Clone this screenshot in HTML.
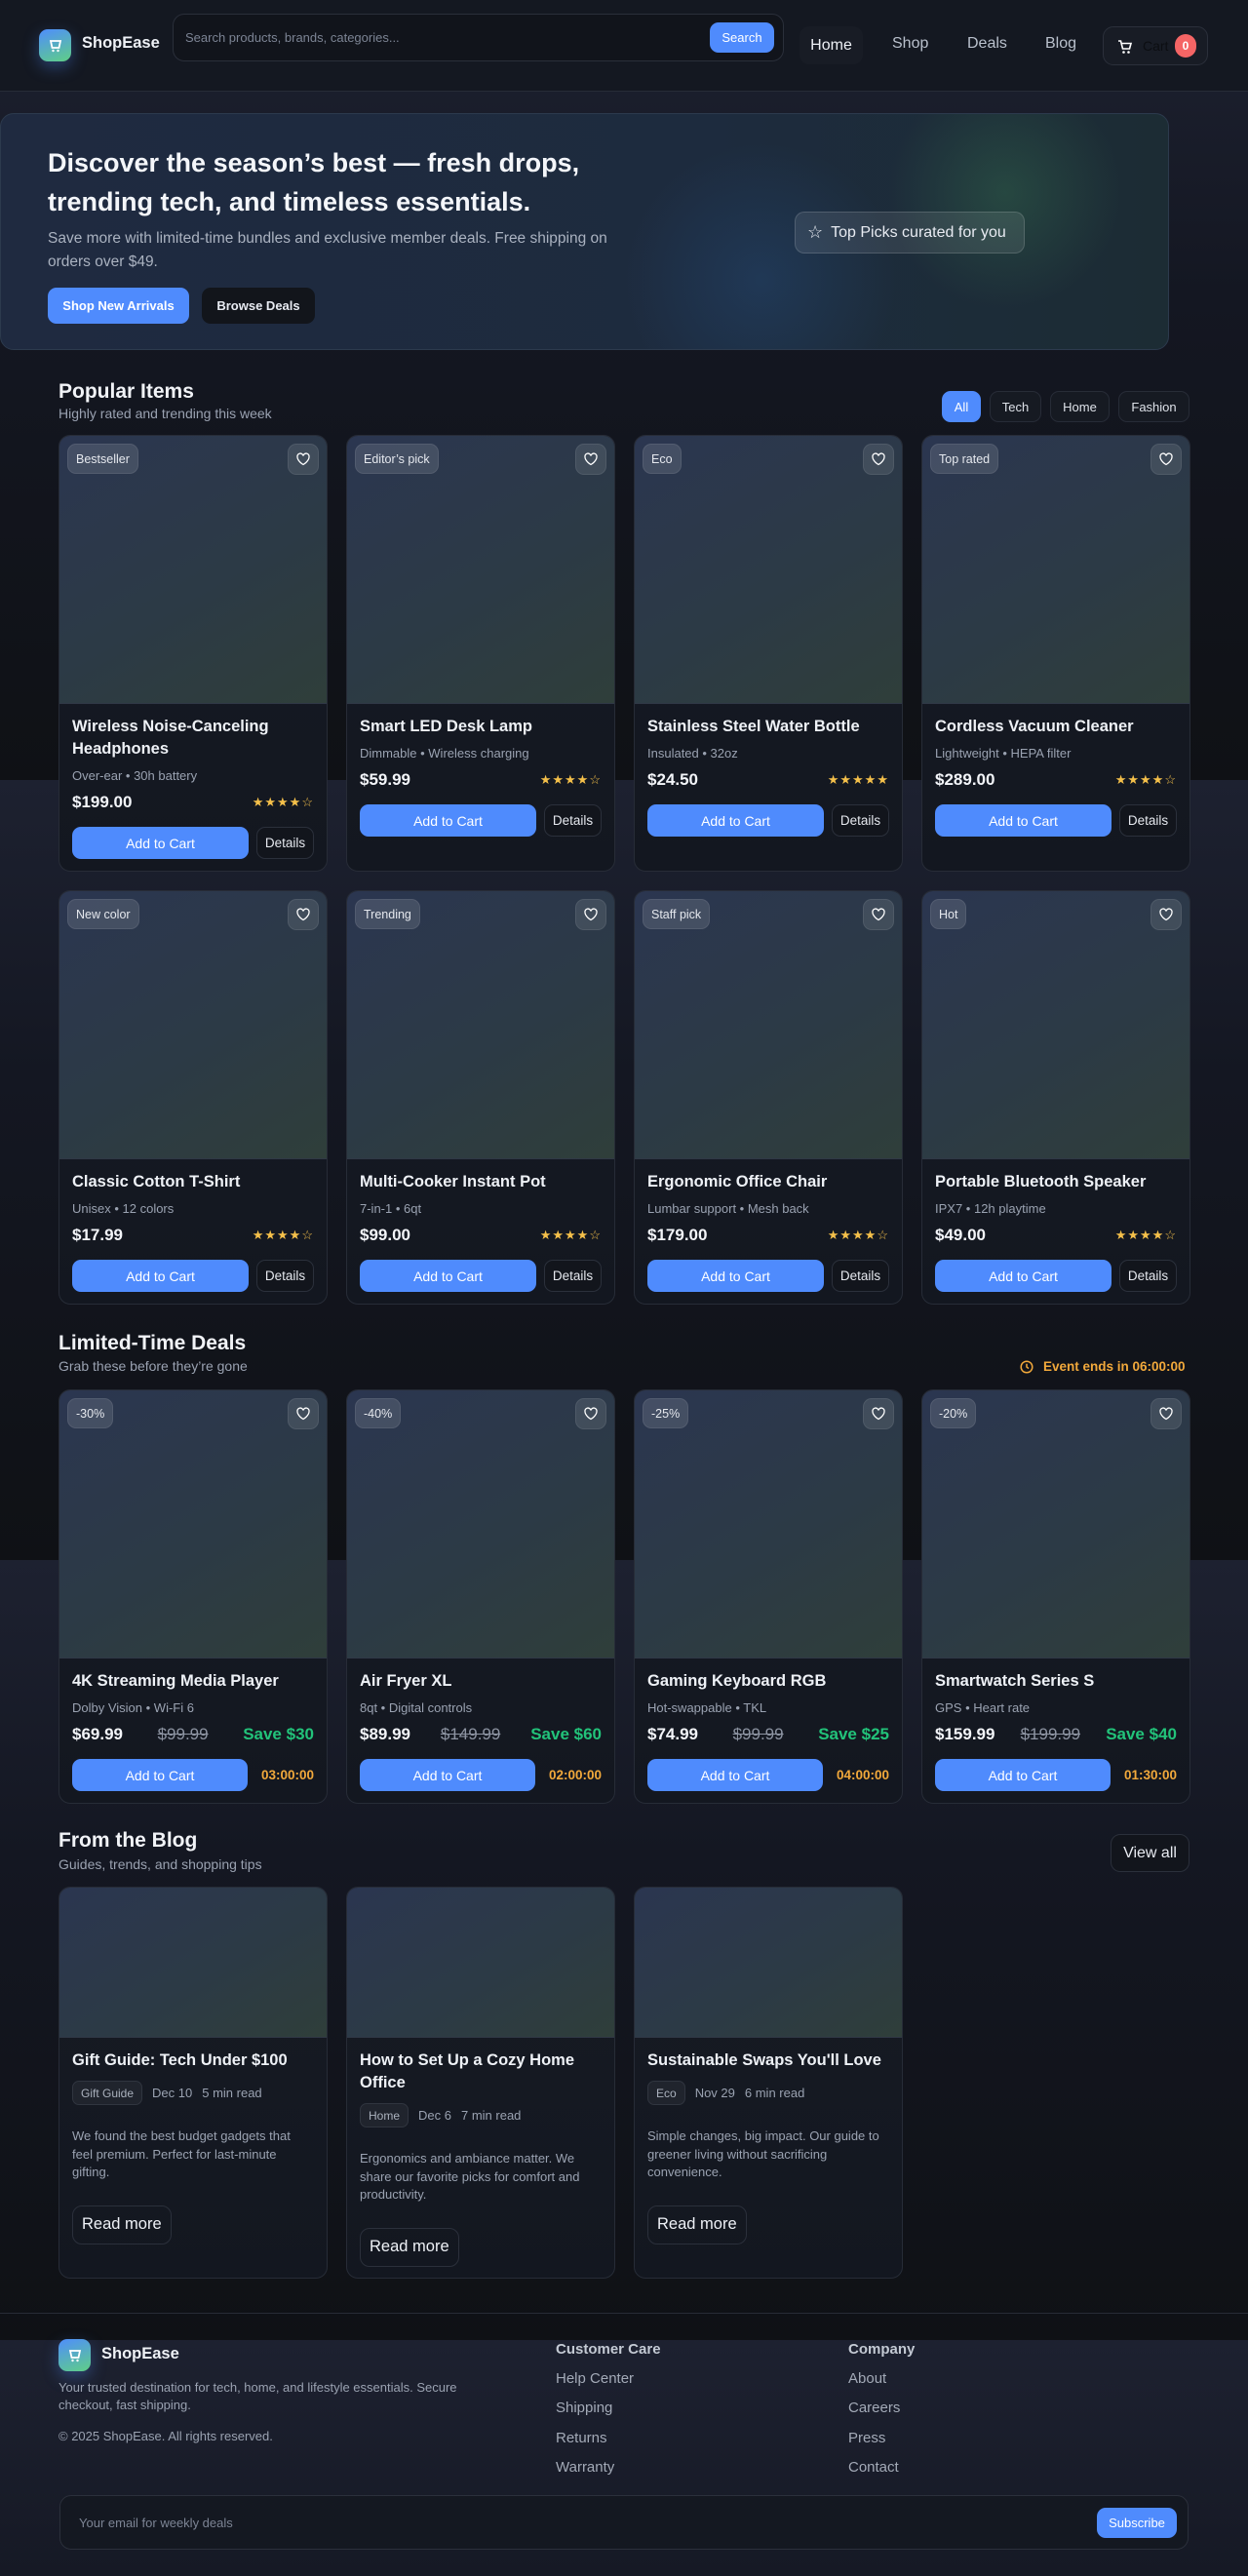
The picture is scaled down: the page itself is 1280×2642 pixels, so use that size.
<!DOCTYPE html>
<html><head><meta charset="utf-8">
<style>
*{box-sizing:border-box;margin:0;padding:0}
body{width:1280px;height:2642px;overflow:hidden;font-family:"Liberation Sans",sans-serif;color:#e8ebf2;
background:#0f1115 repeating-linear-gradient(180deg,#1d2130 0px,#141722 300px,#0f1115 800px);position:relative}
.abs{position:absolute}
header{position:absolute;left:0;top:0;width:1280px;height:94px;background:#141821;border-bottom:1px solid #272c37}
.logo{width:33px;height:33px;border-radius:9px;background:linear-gradient(160deg,#4f8dfd,#5fcf86);box-shadow:0 6px 16px rgba(79,141,253,.35);display:flex;align-items:center;justify-content:center}
.brand{font-weight:700;font-size:16.5px;color:#eef1f6}
.search{left:177px;top:14px;width:627px;height:49px;border:1px solid #2a2f3a;border-radius:12px;background:#11141b}
.search span{position:absolute;left:12px;top:16px;font-size:13px;color:#7c8494}
.btnb{background:#4f8bfd;color:#fff;border-radius:9px;display:flex;align-items:center;justify-content:center}
.nav{font-size:16px;color:#b9c0cc}
.hero{left:0;top:116px;width:1199px;height:243px;border-radius:14px;border:1px solid #2c3a4d;
background:radial-gradient(circle at 1030px 80px,rgba(60,130,85,.32),transparent 120px),radial-gradient(circle at 780px 170px,rgba(40,90,150,.28),transparent 140px),linear-gradient(90deg,#1f2a40,#1d2b3e 60%,#1c2c34)}
h2{font-size:21px;font-weight:700;color:#f1f3f7}
.sub{font-size:14px;color:#9aa2b1}
.chip{position:absolute;top:401px;height:32px;border-radius:9px;border:1px solid #272c37;background:#161a22;font-size:13px;color:#dde1e8;display:flex;align-items:center;justify-content:center}
.row{position:absolute;left:60px;display:flex;gap:19px;width:1161px;align-items:stretch}
.card{width:276px;border:1px solid #272c37;border-radius:12px;background:linear-gradient(180deg,#171b24,#131720);overflow:hidden;position:relative}
.img{height:275px;background:linear-gradient(150deg,#2b3650,#2c3a46 55%,#2f3e3a);border-bottom:1px solid #303846;position:relative}
.badge{position:absolute;left:8px;top:8px;height:31px;padding:0 8px;border-radius:9px;background:rgba(255,255,255,.12);border:1px solid rgba(255,255,255,.08);font-size:12.5px;color:#e5e8ee;display:flex;align-items:center}
.heart{position:absolute;right:8px;top:8px;width:32px;height:32px;border-radius:9px;background:rgba(255,255,255,.1);border:1px solid rgba(255,255,255,.08);display:flex;align-items:center;justify-content:center}
.body{padding:12px 13px 12px}
.t{font-size:16.5px;font-weight:600;line-height:23px;color:#eef1f6}
.m{font-size:13px;color:#9aa2b1;line-height:20px;margin-top:6px}
.pr{display:flex;justify-content:space-between;align-items:center;margin-top:5px;height:24px}
.p{font-size:17px;font-weight:700;color:#f3f5f9}
.stars{color:#f5c04a;font-size:13px;letter-spacing:1px}
.acts{display:flex;gap:8px;margin-top:13px;align-items:center}
.add{flex:1;height:33px;font-size:14px}
.det{width:59px;height:33px;border:1px solid #2b303b;border-radius:9px;font-size:13.5px;display:flex;align-items:center;justify-content:center;color:#e5e8ee;background:#12151c}
.old{font-size:17px;color:#8d94a2;text-decoration:line-through}
.save{font-size:17px;font-weight:700;color:#22c37a}
.cd{font-size:13.5px;color:#f2a93b;font-weight:600;width:60px;text-align:right}
.bimg{height:154px;background:linear-gradient(150deg,#2b3650,#2c3a46 55%,#2f3e3a);border-bottom:1px solid #303846}
.tag{display:inline-block;padding:0 8px;height:25px;line-height:24px;border-radius:7px;border:1px solid #30353f;background:#20242d;font-size:12px;color:#aab1bd}
.bm{display:flex;align-items:center;gap:10px;margin-top:9px;font-size:13px;color:#9aa2b1}
.desc{font-size:13px;line-height:18.5px;color:#9aa2b1;margin-top:23px}
.rm{display:inline-flex;align-items:center;height:40px;padding:0 9px;border:1px solid #2b303b;border-radius:10px;font-size:16.5px;color:#eef1f6;margin-top:24px}
footer .h{font-size:15px;font-weight:700;color:#c3c9d3}
footer .l{font-size:15px;color:#a3aab7;position:absolute}
</style></head><body>
<header>
 <div class="abs logo" style="left:40px;top:30px"><svg width="14" height="14" viewBox="0 0 14 14"><path d="M2 2h10l-1.5 7h-7z" fill="none" stroke="#fff" stroke-width="1.8"/><circle cx="4.5" cy="12" r="1.2" fill="#fff"/><circle cx="9.5" cy="12" r="1.2" fill="#fff"/></svg></div>
 <div class="abs brand" style="left:84px;top:35px">ShopEase</div>
 <div class="abs search"><span>Search products, brands, categories...</span><div class="abs btnb" style="left:550px;top:8px;width:66px;height:31px;font-size:13px">Search</div></div>
 <div class="abs nav" style="left:820px;top:27px;width:65px;height:39px;border-radius:10px;background:#181c25;color:#eef1f6;display:flex;align-items:center;justify-content:center">Home</div>
 <div class="abs nav" style="left:915px;top:36px">Shop</div>
 <div class="abs nav" style="left:992px;top:36px">Deals</div>
 <div class="abs nav" style="left:1072px;top:36px">Blog</div>
 <div class="abs" style="left:1131px;top:27px;width:108px;height:40px;border:1px solid #2b303b;border-radius:11px;background:#181c25">
  <svg class="abs" style="left:14px;top:12px" width="16" height="16" viewBox="0 0 16 16"><path d="M1 2h2.5l2 8h7l1.5-5.5H4.5" fill="none" stroke="#fff" stroke-width="1.6"/><circle cx="6.5" cy="13.5" r="1.3" fill="#fff"/><circle cx="11.5" cy="13.5" r="1.3" fill="#fff"/></svg>
  <span class="abs" style="left:40px;top:11px;font-size:14px;color:#0c0e12">Cart</span>
  <div class="abs" style="left:73px;top:7px;width:22px;height:24px;border-radius:12px;background:#f56565;color:#fff;font-size:12px;font-weight:700;display:flex;align-items:center;justify-content:center">0</div>
 </div>
</header>

<div class="abs hero">
 <div class="abs" style="left:48px;top:30px;font-size:27px;font-weight:700;line-height:40px;color:#f4f6fa;width:600px">Discover the season’s best — fresh drops, trending tech, and timeless essentials.</div>
 <div class="abs" style="left:48px;top:116px;font-size:15.5px;line-height:24px;color:#aab2c0;width:620px">Save more with limited-time bundles and exclusive member deals. Free shipping on orders over $49.</div>
 <div class="abs btnb" style="left:48px;top:178px;width:145px;height:37px;font-size:13px;font-weight:700">Shop New Arrivals</div>
 <div class="abs" style="left:206px;top:178px;width:116px;height:37px;border-radius:9px;background:#12151b;font-size:13px;font-weight:700;display:flex;align-items:center;justify-content:center">Browse Deals</div>
 <div class="abs" style="left:814px;top:100px;width:236px;height:43px;border-radius:10px;border:1px solid rgba(255,255,255,.15);background:rgba(255,255,255,.09);display:flex;align-items:center;gap:8px;padding-left:12px;font-size:16px;color:#e8ebf2"><span style="font-size:18px">☆</span>Top Picks curated for you</div>
</div>

<h2 class="abs" style="left:60px;top:390px">Popular Items</h2>
<div class="abs sub" style="left:60px;top:416px">Highly rated and trending this week</div>
<div class="chip" style="left:966px;width:40px;background:#4f8bfd;border-color:#4f8bfd;color:#fff">All</div>
<div class="chip" style="left:1015px;width:53px">Tech</div>
<div class="chip" style="left:1077px;width:61px">Home</div>
<div class="chip" style="left:1147px;width:73px">Fashion</div>

<svg width="0" height="0" style="position:absolute"><defs><symbol id="h" viewBox="0 0 16 16"><path d="M8 13.5S2 10 2 5.8A3 3 0 0 1 8 4.5a3 3 0 0 1 6 1.3C14 10 8 13.5 8 13.5z" fill="none" stroke="#fff" stroke-width="1.3"/></symbol></defs></svg>

<div class="row" style="top:446px">
 <div class="card"><div class="img"><div class="badge">Bestseller</div><div class="heart"><svg width="16" height="16"><use href="#h"/></svg></div></div><div class="body"><div class="t">Wireless Noise-Canceling Headphones</div><div class="m">Over-ear • 30h battery</div><div class="pr"><span class="p">$199.00</span><span class="stars">★★★★☆</span></div><div class="acts"><div class="btnb add">Add to Cart</div><div class="det">Details</div></div></div></div>
 <div class="card"><div class="img"><div class="badge">Editor’s pick</div><div class="heart"><svg width="16" height="16"><use href="#h"/></svg></div></div><div class="body"><div class="t">Smart LED Desk Lamp</div><div class="m">Dimmable • Wireless charging</div><div class="pr"><span class="p">$59.99</span><span class="stars">★★★★☆</span></div><div class="acts"><div class="btnb add">Add to Cart</div><div class="det">Details</div></div></div></div>
 <div class="card"><div class="img"><div class="badge">Eco</div><div class="heart"><svg width="16" height="16"><use href="#h"/></svg></div></div><div class="body"><div class="t">Stainless Steel Water Bottle</div><div class="m">Insulated • 32oz</div><div class="pr"><span class="p">$24.50</span><span class="stars">★★★★★</span></div><div class="acts"><div class="btnb add">Add to Cart</div><div class="det">Details</div></div></div></div>
 <div class="card"><div class="img"><div class="badge">Top rated</div><div class="heart"><svg width="16" height="16"><use href="#h"/></svg></div></div><div class="body"><div class="t">Cordless Vacuum Cleaner</div><div class="m">Lightweight • HEPA filter</div><div class="pr"><span class="p">$289.00</span><span class="stars">★★★★☆</span></div><div class="acts"><div class="btnb add">Add to Cart</div><div class="det">Details</div></div></div></div>
</div>

<div class="row" style="top:913px">
 <div class="card"><div class="img"><div class="badge">New color</div><div class="heart"><svg width="16" height="16"><use href="#h"/></svg></div></div><div class="body"><div class="t">Classic Cotton T-Shirt</div><div class="m">Unisex • 12 colors</div><div class="pr"><span class="p">$17.99</span><span class="stars">★★★★☆</span></div><div class="acts"><div class="btnb add">Add to Cart</div><div class="det">Details</div></div></div></div>
 <div class="card"><div class="img"><div class="badge">Trending</div><div class="heart"><svg width="16" height="16"><use href="#h"/></svg></div></div><div class="body"><div class="t">Multi-Cooker Instant Pot</div><div class="m">7-in-1 • 6qt</div><div class="pr"><span class="p">$99.00</span><span class="stars">★★★★☆</span></div><div class="acts"><div class="btnb add">Add to Cart</div><div class="det">Details</div></div></div></div>
 <div class="card"><div class="img"><div class="badge">Staff pick</div><div class="heart"><svg width="16" height="16"><use href="#h"/></svg></div></div><div class="body"><div class="t">Ergonomic Office Chair</div><div class="m">Lumbar support • Mesh back</div><div class="pr"><span class="p">$179.00</span><span class="stars">★★★★☆</span></div><div class="acts"><div class="btnb add">Add to Cart</div><div class="det">Details</div></div></div></div>
 <div class="card"><div class="img"><div class="badge">Hot</div><div class="heart"><svg width="16" height="16"><use href="#h"/></svg></div></div><div class="body"><div class="t">Portable Bluetooth Speaker</div><div class="m">IPX7 • 12h playtime</div><div class="pr"><span class="p">$49.00</span><span class="stars">★★★★☆</span></div><div class="acts"><div class="btnb add">Add to Cart</div><div class="det">Details</div></div></div></div>
</div>

<h2 class="abs" style="left:60px;top:1366px">Limited-Time Deals</h2>
<div class="abs sub" style="left:60px;top:1393px">Grab these before they’re gone</div>
<div class="abs" style="left:1046px;top:1394px;font-size:13.5px;font-weight:600;color:#f2a93b;display:flex;align-items:center;gap:10px"><svg width="14" height="14" viewBox="0 0 14 14"><circle cx="7" cy="7" r="5.8" fill="none" stroke="#f2a93b" stroke-width="1.5"/><path d="M7 3.8V7l2 1.6" fill="none" stroke="#f2a93b" stroke-width="1.5"/></svg>Event ends in 06:00:00</div>

<div class="row" style="top:1425px">
 <div class="card"><div class="img"><div class="badge">-30%</div><div class="heart"><svg width="16" height="16"><use href="#h"/></svg></div></div><div class="body"><div class="t">4K Streaming Media Player</div><div class="m">Dolby Vision • Wi-Fi 6</div><div class="pr"><span class="p">$69.99</span><span class="old">$99.99</span><span class="save">Save $30</span></div><div class="acts"><div class="btnb add">Add to Cart</div><div class="cd">03:00:00</div></div></div></div>
 <div class="card"><div class="img"><div class="badge">-40%</div><div class="heart"><svg width="16" height="16"><use href="#h"/></svg></div></div><div class="body"><div class="t">Air Fryer XL</div><div class="m">8qt • Digital controls</div><div class="pr"><span class="p">$89.99</span><span class="old">$149.99</span><span class="save">Save $60</span></div><div class="acts"><div class="btnb add">Add to Cart</div><div class="cd">02:00:00</div></div></div></div>
 <div class="card"><div class="img"><div class="badge">-25%</div><div class="heart"><svg width="16" height="16"><use href="#h"/></svg></div></div><div class="body"><div class="t">Gaming Keyboard RGB</div><div class="m">Hot-swappable • TKL</div><div class="pr"><span class="p">$74.99</span><span class="old">$99.99</span><span class="save">Save $25</span></div><div class="acts"><div class="btnb add">Add to Cart</div><div class="cd">04:00:00</div></div></div></div>
 <div class="card"><div class="img"><div class="badge">-20%</div><div class="heart"><svg width="16" height="16"><use href="#h"/></svg></div></div><div class="body"><div class="t">Smartwatch Series S</div><div class="m">GPS • Heart rate</div><div class="pr"><span class="p">$159.99</span><span class="old">$199.99</span><span class="save">Save $40</span></div><div class="acts"><div class="btnb add">Add to Cart</div><div class="cd">01:30:00</div></div></div></div>
</div>

<h2 class="abs" style="left:60px;top:1876px">From the Blog</h2>
<div class="abs sub" style="left:60px;top:1904px">Guides, trends, and shopping tips</div>
<div class="abs" style="left:1139px;top:1881px;width:81px;height:39px;border:1px solid #2b303b;border-radius:10px;background:#12151c;font-size:16px;display:flex;align-items:center;justify-content:center">View all</div>

<div class="row" style="top:1935px">
 <div class="card" style="height:402px"><div class="bimg"></div><div class="body"><div class="t">Gift Guide: Tech Under $100</div><div class="bm"><span class="tag">Gift Guide</span><span>Dec 10</span><span>5 min read</span></div><div class="desc">We found the best budget gadgets that feel premium. Perfect for last-minute gifting.</div><div class="rm">Read more</div></div></div>
 <div class="card" style="height:402px"><div class="bimg"></div><div class="body"><div class="t">How to Set Up a Cozy Home Office</div><div class="bm"><span class="tag">Home</span><span>Dec 6</span><span>7 min read</span></div><div class="desc">Ergonomics and ambiance matter. We share our favorite picks for comfort and productivity.</div><div class="rm">Read more</div></div></div>
 <div class="card" style="height:402px"><div class="bimg"></div><div class="body"><div class="t">Sustainable Swaps You'll Love</div><div class="bm"><span class="tag">Eco</span><span>Nov 29</span><span>6 min read</span></div><div class="desc">Simple changes, big impact. Our guide to greener living without sacrificing convenience.</div><div class="rm">Read more</div></div></div>
 <div style="width:276px"></div>
</div>

<footer>
 <div class="abs" style="left:0;top:2372px;width:1280px;height:1px;background:#272c37"></div>
 <div class="abs logo" style="left:60px;top:2399px"><svg width="14" height="14" viewBox="0 0 14 14"><path d="M2 2h10l-1.5 7h-7z" fill="none" stroke="#fff" stroke-width="1.8"/><circle cx="4.5" cy="12" r="1.2" fill="#fff"/><circle cx="9.5" cy="12" r="1.2" fill="#fff"/></svg></div>
 <div class="abs brand" style="left:104px;top:2405px">ShopEase</div>
 <div class="abs" style="left:60px;top:2440px;width:450px;font-size:13px;line-height:18px;color:#9aa2b1">Your trusted destination for tech, home, and lifestyle essentials. Secure checkout, fast shipping.</div>
 <div class="abs" style="left:60px;top:2491px;font-size:13px;color:#9aa2b1">© 2025 ShopEase. All rights reserved.</div>
 <div class="abs h" style="left:570px;top:2401px">Customer Care</div>
 <div class="l" style="left:570px;top:2431px">Help Center</div>
 <div class="l" style="left:570px;top:2461px">Shipping</div>
 <div class="l" style="left:570px;top:2492px">Returns</div>
 <div class="l" style="left:570px;top:2522px">Warranty</div>
 <div class="abs h" style="left:870px;top:2401px">Company</div>
 <div class="l" style="left:870px;top:2431px">About</div>
 <div class="l" style="left:870px;top:2461px">Careers</div>
 <div class="l" style="left:870px;top:2492px">Press</div>
 <div class="l" style="left:870px;top:2522px">Contact</div>
 <div class="abs" style="left:61px;top:2559px;width:1158px;height:56px;border:1px solid #2b303b;border-radius:12px;background:#141821">
  <span class="abs" style="left:19px;top:20px;font-size:13px;color:#7c8494">Your email for weekly deals</span>
  <div class="abs btnb" style="left:1063px;top:12px;width:82px;height:31px;font-size:13px">Subscribe</div>
 </div>
</footer>
</body></html>
